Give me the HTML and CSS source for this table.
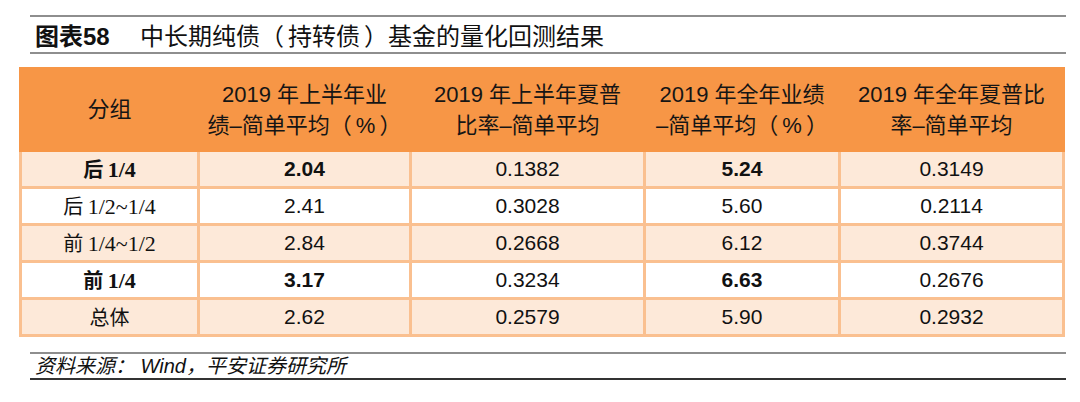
FILE: index.html
```html
<!DOCTYPE html>
<html lang="zh">
<head>
<meta charset="utf-8">
<link rel="stylesheet" href="styles.css">
</head>
<body>
<div class="page">
  <div class="title">
    <span class="fig">图表58</span>
    <span class="caption">中长期纯债<span class="po">（</span>持转债<span class="pe">）</span>基金的量化回测结果</span>
  </div>
  <table class="grid">
    <colgroup>
      <col class="c1"><col class="c2"><col class="c3"><col class="c4"><col class="c5">
    </colgroup>
    <thead>
      <tr>
        <th>分组</th>
        <th>2019 年上半年业<br>绩–简单平均<span class="po">（</span>%<span class="pe">）</span></th>
        <th>2019 年上半年夏普<br>比率–简单平均</th>
        <th>2019 年全年业绩<br>–简单平均<span class="po">（</span>%<span class="pe">）</span></th>
        <th>2019 年全年夏普比<br>率–简单平均</th>
      </tr>
    </thead>
    <tbody>
      <tr class="shade">
        <td class="grp strong">后 <span class="ser">1/4</span></td>
        <td class="strong">2.04</td>
        <td>0.1382</td>
        <td class="strong">5.24</td>
        <td>0.3149</td>
      </tr>
      <tr>
        <td class="grp">后 <span class="ser">1/2~1/4</span></td>
        <td>2.41</td>
        <td>0.3028</td>
        <td>5.60</td>
        <td>0.2114</td>
      </tr>
      <tr class="shade">
        <td class="grp">前 <span class="ser">1/4~1/2</span></td>
        <td>2.84</td>
        <td>0.2668</td>
        <td>6.12</td>
        <td>0.3744</td>
      </tr>
      <tr>
        <td class="grp strong">前 <span class="ser">1/4</span></td>
        <td class="strong">3.17</td>
        <td>0.3234</td>
        <td class="strong">6.63</td>
        <td>0.2676</td>
      </tr>
      <tr class="shade">
        <td class="grp">总体</td>
        <td>2.62</td>
        <td>0.2579</td>
        <td>5.90</td>
        <td>0.2932</td>
      </tr>
    </tbody>
  </table>
  <div class="source">资料来源： Wind，平安证券研究所</div>
</div>
</body>
</html>
```
FILE: styles.css
```css
html, body {
  margin: 0;
  padding: 0;
  background: #ffffff;
}
body {
  font-family: "Liberation Sans", Arial, "Noto Sans CJK SC", sans-serif;
  color: #111111;
}
.page {
  width: 1080px;
  height: 402px;
  padding-top: 15px;
  box-sizing: border-box;
}
.title {
  margin-left: 30px;
  width: 1036px;
  height: 39px;
  box-sizing: border-box;
  border-top: 2px solid #8e8e8e;
  border-bottom: 2px solid #8e8e8e;
  display: flex;
  align-items: center;
  padding-left: 5px;
  font-family: "Liberation Sans", Arial, "Noto Sans CJK SC", sans-serif;
  font-size: 24px;
  color: #111111;
}
.fig {
  font-weight: bold;
  width: 105px;
}
.po {
  margin-right: 4px;
}
.pe {
  margin-left: 4px;
}
.grid {
  margin-left: 19px;
  margin-top: 13px;
  width: 1043px;
  border-collapse: collapse;
  table-layout: fixed;
  font-size: 21px;
}
.c1 { width: 178px; }
.c2 { width: 212px; }
.c3 { width: 234px; }
.c4 { width: 195px; }
.c5 { width: 224px; }
.grid th {
  background: #f79646;
  border: 3px solid #f79646;
  font-weight: normal;
  font-size: 22px;
  line-height: 31px;
  height: 79px;
  padding: 0;
  color: #151515;
}
.grid td {
  border: 3px solid #fac090;
  text-align: center;
  height: 34px;
  padding: 0;
  line-height: 24px;
}
.grid tr.shade td {
  background: #fde9d9;
}
.strong {
  font-weight: bold;
}
.ser {
  font-family: "Liberation Serif", "Times New Roman", serif;
  font-size: 22px;
}
.grp {
  font-family: "Noto Sans CJK SC", sans-serif;
  font-size: 20px;
}
.source {
  margin-left: 30px;
  margin-top: 15px;
  width: 1036px;
  height: 28px;
  box-sizing: border-box;
  border-top: 2px solid #8e8e8e;
  border-bottom: 2px solid #333333;
  padding-left: 5px;
  font-style: italic;
  font-size: 20px;
  line-height: 24px;
  color: #111111;
}
```
